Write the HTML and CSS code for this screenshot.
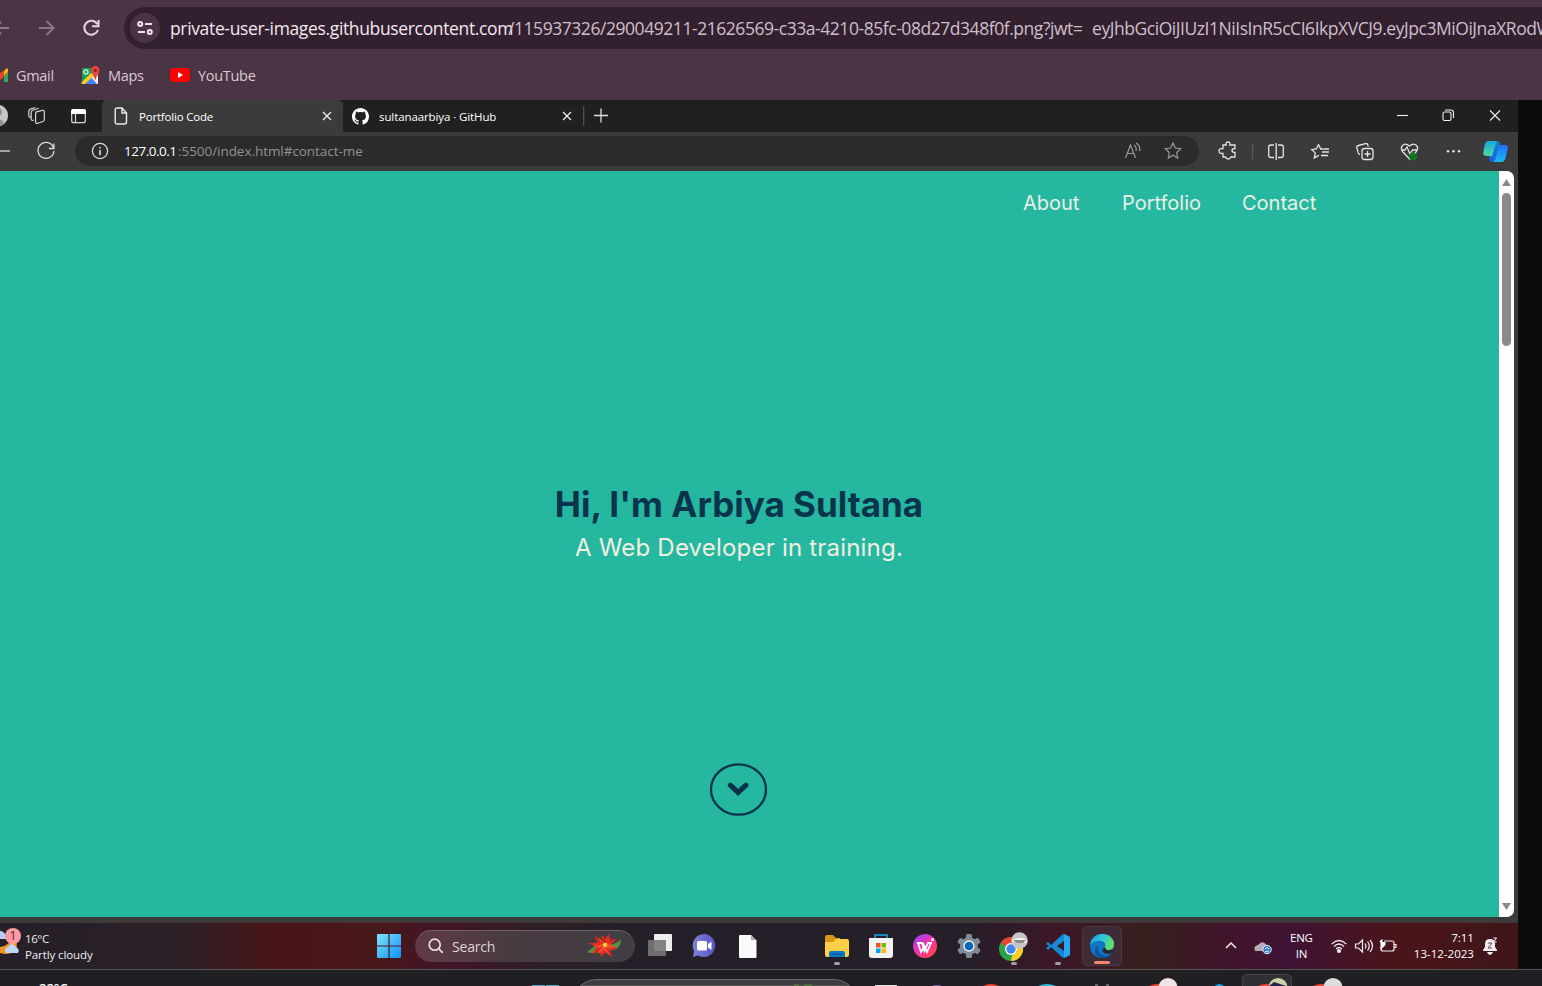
FILE: index.html
```html
<!DOCTYPE html>
<html lang="en">
<head>
<meta charset="utf-8">
<title>Portfolio Code</title>
<link rel="stylesheet" href="styles.css">
</head>
<body>
<header class="chrome">
  <div class="chrome-nav">
    <svg class="nav-back" width="23" height="20" fill="none" stroke="#8a7786" stroke-width="2"><path d="M9 10H-5M1 4l-6 6 6 6"/></svg>
    <svg width="46" height="20" fill="none" stroke="#8a7786" stroke-width="2"><path d="M16 10h14M23.500 3l7 7-7 7"/></svg>
    <svg width="44" height="20" fill="none" stroke="#e6d3e2" stroke-width="2.100"><path d="M28.400 6.200A7 7 0 1 0 29 12"/><path d="M29.500 2v6.300h-6.300"/></svg>
    <div class="omnibox">
      <span class="site-info"><svg width="16" height="14" fill="none" stroke="#eee3ec" stroke-width="2"><circle cx="3.200" cy="3" r="2"/><path d="M8 3h7M1 11h7"/><circle cx="12.800" cy="11" r="2"/></svg></span>
      <span class="long-url"><b>private-user-images.githubusercontent.com</b><i>/115937326/290049211-21626569-c33a-4210-85fc-08d27d348f0f.png?jwt=</i><em>eyJhbGciOiJIUzI1NiIsInR5cCI6IkpXVCJ9.eyJpc3MiOiJnaXRodWIu</em></span>
    </div>
  </div>
  <div class="bookmarks">
    <div class="bookmark gmail"><svg width="9" height="15"><path d="M0 5l8-5v6L0 12z" fill="#ea4335"/><path d="M4 4l1.500-3Q8-.5 8 2v2L4 8z" fill="#fbbc04"/><path d="M4 7.500L8 4v10H4z" fill="#34a853"/></svg><span>Gmail</span></div>
    <div class="bookmark maps"><svg width="19" height="19"><path d="M1 2h16v16H1z" fill="#e9eef3"/><path d="M1 2h13v4L1 17z" fill="#1e9e56"/><path d="M1 17L12 7l5 6v5h-2L9 11l-8 7z" fill="#f5f3e9"/><path d="M3 18l7-7 6 7z" fill="#3f7df0"/><path d="M0 17L10 7l3 3-9 8H1z" fill="#fbc928"/><path d="M6 18l4.500-5 4.500 5z" fill="#4285f4"/><circle cx="5" cy="6" r="2" fill="none" stroke="#c9efd6" stroke-width="1.300"/><path d="M10 4.200a4.300 4.300 0 018.600 0c0 3-3 4.800-3.800 9.300h-1C13 9 10 7 10 4.200z" fill="#e94537"/><circle cx="14.300" cy="4.400" r="1.700" fill="#98241d"/></svg><span>Maps</span></div>
    <div class="bookmark youtube"><svg width="20" height="14"><rect width="20" height="14" rx="3.500" fill="#f00"/><path d="M8 4v6l5-3z" fill="#fff"/></svg><span>YouTube</span></div>
  </div>
</header>

<main class="capture">
  <section class="edge">
    <div class="tabstrip">
      <div class="strip-tools">
        <svg width="102" height="32" fill="none" stroke="#d5d5d5" stroke-width="1.200"><circle cx="-3" cy="15.500" r="11" fill="#c9c7c4" stroke="none"/><circle cx="-3" cy="12" r="5" fill="#96918d" stroke="none"/><path d="M-9 25q5-9 12-4l1 3q-5 4-13 1" fill="#96918d" stroke="none"/>
        <path d="M35.500 12.200l6.700-1.900q2-.3 2.100 1.700v7.500q0 1.500-1.500 2l-5 1.800q-2.200.6-2.200-1.500v-8.200q0-1 .9-1.400z"/><path d="M34 20l-1.500.5q-1.300 0-1.300-1.500v-6.500q0-1.500 1.500-2.200l6-2"/><path d="M31 17l-.8.300q-1.400 0-1.400-1.500v-4.500q0-1.700 1.500-2.200l5-1.600"/>
        <rect x="71.700" y="9.700" width="13.600" height="13" rx="2"/><path d="M71 14v-3q0-2 2-2h11q2 0 2 2v3z" fill="#fff" stroke="none"/><path d="M75.500 14v8.500"/></svg>
      </div>
      <div class="tab active">
        <svg width="14" height="18" fill="none" stroke="#ececec" stroke-width="1.400"><path d="M1.200 3q0-2 2-2H8l4.500 5v9q0 2-2 2H3.200q-2 0-2-2z"/><path d="M8 1v5h4.500"/></svg>
        <span>Portfolio Code</span>
        <svg class="close" width="10" height="10" stroke="#eee" stroke-width="1.300"><path d="M1 1l8 8M9 1L1 9"/></svg>
      </div>
      <div class="tab second">
        <svg width="17" height="17" viewBox="0 0 16 16"><path fill="#fff" d="M8 0C3.580 0 0 3.580 0 8c0 3.540 2.290 6.530 5.470 7.590.4.070.55-.17.55-.38 0-.19-.01-.82-.01-1.490-2.010.37-2.530-.49-2.690-.94-.09-.23-.48-.94-.82-1.130-.28-.15-.68-.52-.01-.53.63-.01 1.080.58 1.230.82.72 1.210 1.870.87 2.330.66.07-.52.28-.87.51-1.070-1.780-.2-3.640-.89-3.640-3.950 0-.87.31-1.590.82-2.150-.08-.2-.36-1.020.08-2.120 0 0 .67-.21 2.200.82.640-.18 1.320-.27 2-.27s1.360.09 2 .27c1.530-1.040 2.200-.82 2.200-.82.440 1.100.16 1.920.08 2.120.510.56.82 1.270.82 2.150 0 3.070-1.870 3.750-3.650 3.950.290.25.54.73.54 1.480 0 1.070-.01 1.930-.01 2.200 0 .21.15.46.55.38A8.010 8.010 0 0016 8c0-4.420-3.580-8-8-8z"/></svg>
        <span>sultanaarbiya · GitHub</span>
        <svg class="close" width="10" height="10" stroke="#eee" stroke-width="1.300"><path d="M1 1l8 8M9 1L1 9"/></svg>
      </div>
      <svg class="new-tab" width="28" height="22" stroke-width="1.300"><path d="M.7 1v20" stroke="#555"/><path d="M11 10.500h14M18 3.500v14" stroke="#ddd"/></svg>
      <svg class="window-controls" width="106" height="16" fill="none" stroke="#eee" stroke-width="1.100"><path d="M1 8.500h11"/><rect x="47" y="5" width="8" height="8.500" rx="1.500"/><path d="M49 3h6q2.500 0 2.500 2.500V11"/><path d="M94 3.500l10 10M104 3.500l-10 10"/></svg>
    </div>

    <div class="toolbar">
      <svg class="tool-nav" width="75" height="30" fill="none" stroke="#ddd" stroke-width="1.300"><path d="M10 15H-4"/><path d="M53.500 11.500A8 8 0 1 0 54 15M53.900 7.500v5h-5"/></svg>
      <div class="address">
        <svg width="18" height="18" fill="none" stroke="#ddd" stroke-width="1.300"><circle cx="9" cy="9" r="7.600"/><path d="M9 8v5.200M9 5v1.500" stroke-width="1.600"/></svg>
        <span class="local-url"><b>127.0.0.1</b><i>:5500/index.html#contact-me</i></span>
        <svg class="address-actions" width="60" height="20" fill="none" stroke="#999" stroke-width="1.200"><path d="M1.500 17l5-13 5 13M3.500 12.500h6M10 4q3 2 2 6M12 2q5 3 3.500 8"/><path d="M49 2l2.300 5 5.400.7-4 3.800 1 5.500-4.700-2.700-4.700 2.700 1-5.500-4-3.800 5.400-.7z"/></svg>
      </div>
      <svg class="extensions" width="319" height="30" fill="none" stroke="#e4e4e4" stroke-width="1.300"><path d="M23 10h3.200q-.8-3 1.800-3t1.800 3H35v3.500q-3 0-3 2t3 2V22h-4.200q-.5 2-2.600 2t-2.600-2H23v-3.500q-4 .2-4-2.500t4-2.500z" transform="translate(1 -1)"/><path d="M53.500 8v15" stroke="#5b5b5b"/>
      <path d="M75 9h-3q-2.300 0-2.300 2.200v8q0 2.300 2.300 2.300h3M79 9h3q2.300 0 2.300 2.200v8q0 2.300-2.300 2.300h-3M77.200 7v17"/>
      <path d="M119.500 8.500l2.200 4.500h3M119.500 8.500l-2.200 4.500-4.500.6 3.500 3.300-1 5 4.500-2.500M123 16h7M125 13h5M122 19.500h7"/>
      <rect x="163" y="12.500" width="11" height="11" rx="2.500"/><path d="M168.500 15v6M165.500 18h6M161 18.500q-1.300 0-1.800-1.600l-1.300-5q-.4-1.900 1.600-2.400l7-1.900q1.900-.4 2.400 1.500l.4 1.400"/>
      <path d="M204 16q-3-4-.5-6.500 3-3 7 .5 4-3.500 7-.5 2.500 2.500-.5 6.500l-6.500 7zM202 14h4l2-3 3 7 2.500-4h5"/><circle cx="214" cy="20.500" r="4" fill="#137c20" stroke="none"/><path d="M212 20.500l1.500 1.500 2.700-3" stroke="#174719" stroke-width="1"/>
      <g fill="#e8e8e8" stroke="none"><circle cx="249" cy="15.300" r="1.200"/><circle cx="254.500" cy="15.300" r="1.200"/><circle cx="260" cy="15.300" r="1.200"/></g>
      <g stroke="none"><path d="M289 5h8q2 0 1.500 2l-3.500 13h-7q-5 0-3.500-5l1.500-7q1-3 3-3z" fill="url(#copA)"/><path d="M300 9h6q4 0 2.500 5l-2 8q-1 4-4 4h-7q-2 0-1.500-2z" fill="url(#copB)"/><path d="M298 5q3 0 3 4l-1 2-4 13q-1 2-3 2-3 0-3-6h3l4-13z" fill="url(#copC)"/></g>
      <defs><linearGradient id="copA" x2="0" y2="1"><stop stop-color="#12a9df"/><stop offset="1" stop-color="#50d9a0"/></linearGradient><linearGradient id="copB" x2="0" y2="1"><stop stop-color="#226cff"/><stop offset="1" stop-color="#18bcef"/></linearGradient><linearGradient id="copC" x2="0" y2="1"><stop stop-color="#1285b5"/><stop offset="1" stop-color="#205eed"/></linearGradient></defs></svg>
    </div>

    <div class="viewport">
      <div class="site">
        <nav><a class="about">About</a><a class="portfolio">Portfolio</a><a class="contact">Contact</a></nav>
        <h1>Hi, I'm Arbiya Sultana</h1>
        <p>A Web Developer in training.</p>
        <svg class="scroll-down" width="59" height="55" fill="none" stroke="#0a344c"><ellipse cx="29.500" cy="27.500" rx="27.500" ry="25.200" stroke-width="2.300"/><path d="M21.300 23.200l7.800 7.300 7.800-7.300" stroke-width="5.200" stroke-linecap="round"/></svg>
      </div>
      <div class="scrollbar">
        <svg width="15" height="22"><path d="M7.500 8l4.500 7H3z" fill="#8a8a8a"/></svg>
        <div class="thumb"></div>
        <svg class="down" width="15" height="22"><path d="M7.500 15l4.500-7H3z" fill="#8a8a8a"/></svg>
      </div>
    </div>
  </section>

  <footer class="taskbar">
    <div class="weather">
      <svg width="25" height="46"><path d="M0 24q10-1 11-10 8 5 5 12-5 7-16 4z" fill="#ef9420"/><path d="M-3 8q8-2 10 8H-3z" fill="#b5cff5"/><path d="M6 30q-3-5 2-6 4-6 8 0 4 2 2 6z" fill="#bdd7fb"/><circle cx="13" cy="13" r="8" fill="#ff99a4"/><text x="13" y="17" class="badge">1</text></svg>
      <div class="forecast"><span>16°C</span><span>Partly cloudy</span></div>
    </div>
    <svg class="start" width="24" height="24" fill="url(#winG)"><defs><linearGradient id="winG" gradientUnits="userSpaceOnUse" x1="0" y1="0" x2="24" y2="24"><stop stop-color="#80e2ff"/><stop offset="1" stop-color="#0b92f4"/></linearGradient></defs><path d="M0 1q0-1 1-1h10.400v11.400H0zM12.600 0H23q1 0 1 1v10.400H12.600zM0 12.600h11.400V24H1q-1 0-1-1zM12.600 12.600H24V23q0 1-1 1H12.600z"/></svg>
    <div class="search">
      <svg width="16" height="16" fill="none" stroke="#e4dce1" stroke-width="1.800"><circle cx="6.700" cy="6.700" r="5.500"/><path d="M10.800 10.800l4 4"/></svg>
      <span>Search</span>
      <svg class="flower" width="36" height="24"><path d="M10 11L1 18q7 3 13-2zM23 10q7 1 12-5 0 11-11 11zM8 16l8 4-3-7z" fill="#5b8d3c"/><path d="M18 11L9 1l2 8-9 0 9 4-5 7 8-3 1 6 5-5 6 5-2-7 7-1-7-4 7-6-8 1 1-6-5 4-4-3z" fill="#e22d1c"/><path d="M18 10l-5-7 1 8-7 1 7 2-3 6 7-4 5 5-1-7 7-1-7-3 3-6z" fill="#ff4a2f"/><path d="M18 11l-9-6M18 11L11 18M18 11l10-7M18 11l6 8M18 11l1-9" stroke="#a81617" stroke-width=".8"/><circle cx="19" cy="11" r="2.200" fill="#f3d738"/></svg>
    </div>
    <div class="apps">
      <span><svg width="24" height="24"><rect x="6" width="18" height="17" rx="1" fill="#eee"/><rect y="6" width="18" height="16" rx="1" fill="#777" opacity=".9"/></svg></span>
      <span><svg width="24" height="24"><path d="M12 0a11.500 11.500 0 11-6 21.500L1 23l1-6A11.500 11.500 0 0112 0z" fill="url(#chatG)"/><rect x="5" y="7" width="10" height="9.500" rx="1.500" fill="#fff"/><path d="M16 10l3.500-2.500v8.500L16 13.500z" fill="#fff"/><defs><linearGradient id="chatG"><stop stop-color="#7c82ce"/><stop offset="1" stop-color="#5757cd"/></linearGradient></defs></svg></span>
      <span><svg width="18" height="23"><path d="M0 1q0-1 1-1h11l5.500 5.500V22q0 1-1 1H1q-1 0-1-1z" fill="#fafafa"/><path d="M12 0v5h5z" fill="#aaa"/></svg></span>
      <span></span>
      <span class="running"><svg width="24" height="24"><path d="M0 3q0-2 2-2h6l3 3h4v5H0z" fill="#d69514"/><path d="M0 8h8l3-3h11q2 0 2 2v14q0 2-2 2H2q-2 0-2-2z" fill="#ffcf49"/><path d="M4 23v-4q0-2 2-2h12q2 0 2 2v4z" fill="#0878c9"/><path d="M6 20h12" stroke="#064b8e"/></svg></span>
      <span><svg width="24" height="24"><path d="M6 5V1h12v4" fill="none" stroke="#1ba8ea" stroke-width="1.500"/><path d="M0 4h24v17q0 3-3 3H3q-3 0-3-3z" fill="#f1f1f1"/><path d="M7 9h4.500v4.500H7z" fill="#f15228"/><path d="M12.500 9H17v4.500h-4.500z" fill="#7db900"/><path d="M7 14.500h4.500V19H7z" fill="#04a5ef"/><path d="M12.500 14.500H17V19h-4.500z" fill="#ffb901"/></svg></span>
      <span><svg width="24" height="24"><defs><linearGradient id="wpsG" x2=".8" y2="1"><stop stop-color="#824cff"/><stop offset=".5" stop-color="#f432b6"/><stop offset="1" stop-color="#ff443e"/></linearGradient></defs><circle cx="12" cy="12" r="12" fill="url(#wpsG)"/><path d="M4 9h5l2.500 8 3.500-8h3l-4 9-4-9M5 9l3 9 3-5M15 9h4" fill="none" stroke="#fff" stroke-width="1.800"/><circle cx="19.500" cy="5.500" r="1.500" fill="#fff"/></svg></span>
      <span><svg width="24" height="24"><g fill="#7f8c97"><circle cx="12" cy="12" r="9"/><g id="cog"><rect x="9" width="6" height="24" rx="1.500"/><rect x="9" width="6" height="24" rx="1.500" transform="rotate(60 12 12)"/><rect x="9" width="6" height="24" rx="1.500" transform="rotate(120 12 12)"/></g></g><circle cx="12" cy="12" r="5.700" fill="#f0f2f3"/><circle cx="12" cy="12" r="4.300" fill="#0868b8"/></svg></span>
      <span class="running"><svg width="29" height="29"><circle cx="12" cy="17" r="12" fill="#2ba24c"/><path d="M12 17L1.600 11A12 12 0 0122.400 11z" fill="#e94436"/><path d="M12 17h12A12 12 0 0012 29l5.500-9z" fill="#ffcf24"/><path d="M12 11h10.400A12 12 0 0112 29l6-10z" fill="#ffcf24"/><circle cx="12" cy="17" r="6" fill="#fff"/><circle cx="12" cy="17" r="4.700" fill="#4285f4"/><circle cx="20.500" cy="8.500" r="8.300" fill="#c6c6c6"/><path d="M13 8q8-4 15 0l-1 3q-7-3-14-1z" fill="#f4f4f4"/><path d="M14 8h13l-3 3h-6z" fill="#888"/></svg></span>
      <span class="running"><svg width="24" height="24"><path d="M17 0l7 3v18l-7 3L5 13l-3 3-2-2 3-2-3-2 2-2 3 3zM18 7l-7 5 7 5z" fill="#1688d4" fill-rule="evenodd"/><path d="M18 0l6 3v18l-6 3z" fill="#27a7f2"/></svg></span>
      <span class="current"><svg width="24" height="24"><defs><linearGradient id="edgeG" x2="1" y2=".4"><stop stop-color="#149bd8"/><stop offset=".55" stop-color="#30c6df"/><stop offset="1" stop-color="#60df65"/></linearGradient></defs><circle cx="12" cy="12" r="12" fill="#1373c5"/><path d="M0 11C1 4 6 0 12 0c8 0 12 5 12 10 0 4-3 6-6 6-4 0-5-2-3-3 2-4-3-7-7-6-4 0-7 3-8 4z" fill="url(#edgeG)"/><path d="M8 11c-2 8 5 13 12 10q-7 6-13 1-5-5 1-11z" fill="#0b549f"/><path d="M15 13q-5 3-1 6 4 2 8 0l3-4-5 1q-4 1-5-3z" fill="#292635"/></svg></span>
    </div>
    <div class="tray">
      <svg class="tray-left" width="60" height="24" fill="none" stroke="#eee" stroke-width="1.500"><path d="M2 14l5-5 5 5"/><path d="M31 17q-2-5 3-6 5-6 9 1 4 2 3 5z" fill="#bca9b6" stroke="none"/><circle cx="43" cy="15.500" r="4.200" fill="#2f7bd0" stroke="#f1f5fa" stroke-width="1"/><path d="M41 15q2-3 4 0M41 17q2 2 4 0" stroke="#fff" stroke-width="1"/></svg>
      <div class="lang"><span>ENG</span><span>IN</span></div>
      <svg class="status" width="66" height="20" fill="none" stroke="#f0edf0" stroke-width="1.200"><path d="M.7 8q7.300-7 14.600 0M3 10.500q5-5 10 0M5 13q3-3 6 0"/><circle cx="8" cy="15" r="1.400" fill="#fff"/><path d="M24.500 8h3l4-4v12l-4-4h-3zM34 7.500q2 2.500 0 5M36.500 5.500q3.500 4.500 0 9M39 4q5 6 0 12"/><path d="M53 5h8q2 0 2 2v6q0 2-2 2H52q-2 0-2-2v-2M63 8.500h2v3h-2"/><path d="M51.500 3v3h3v3l-4 4v3l-1-4v-5l-1-2z" fill="#fff" stroke="none"/></svg>
      <div class="clock"><span>7:11</span><span>13-12-2023</span></div>
      <svg class="bell" width="16" height="18"><path d="M0 13l2-3V7q0-5 5-5t5 5v3l2 3v1H0zM4 15h6q-1 3-3 3t-3-3z" fill="#f2edf0"/><path d="M5 6h4l-4 5h4M10 1h4l-3 4h3" fill="none" stroke="#654047" stroke-width="1"/><path d="M10.500 1h3l-3 4h3" fill="none" stroke="#f2edf0"/></svg>
    </div>
  </footer>
</main>

<footer class="lower-taskbar">
  <span class="lower-temp">22°C</span>
  <svg class="lower-icons" width="1542" height="16"><path d="M532 15h13v1h-13zM546 15h13v1h-13z" fill="#4ea4ca"/><path d="M580 16q8-6.500 17-6.500h236q10 0 17 6.500z" fill="#3d3c40" stroke="#69686b"/><path d="M794 15h5M804 15h8" stroke="#5b9737"/><path d="M875 15h22v1h-22z" fill="#e2e2e2"/><path d="M932 16q5-2 10 0z" fill="#8875b4"/><path d="M983 16q8-4 16 0z" fill="#e94535"/><path d="M1038 16q9-4 18 0z" fill="#27bdd2"/><path d="M1095 15h3M1106 15h3" stroke="#aaa"/><path d="M1149 16q9-4 17 0z" fill="#e94535"/><circle cx="1168" cy="17.500" r="9.500" fill="#f2e5e5"/><path d="M1215 16q4-4 9 0z" fill="#1da5e5"/><rect x="1242.500" y="4.500" width="49" height="20" rx="4" fill="#302f33" stroke="#434246"/><path d="M1258 16q8-4 17 0z" fill="#e94535"/><circle cx="1278" cy="17.500" r="9.500" fill="#c9d4a5"/><path d="M1269 16l5-4 12 4z" fill="#25234e"/><path d="M1313 16q8-4 17 0z" fill="#e94535"/><circle cx="1333" cy="17.500" r="9.500" fill="#ddd"/></svg>
</footer>
</body>
</html>
```

FILE: styles.css
```css
* { box-sizing: border-box; }
html, body { margin: 0; width: 1542px; height: 986px; overflow: hidden; }
body { display: flex; flex-direction: column; background: #0c0c0c; color: #fff; font-family: "Open Sans", "Noto Sans", sans-serif; }
svg { display: block; flex: none; }
b, i, em { font-style: normal; font-weight: 400; }
span, a { white-space: nowrap; }

.chrome { height: 100px; flex: none; background: #4b3545; overflow: hidden; }
.chrome-nav { display: flex; align-items: center; height: 42px; margin-top: 7px; }
.omnibox { display: flex; align-items: center; flex: 1; height: 42px; margin-left: 11px; padding-left: 6px; gap: 10px; overflow: hidden; background: #33202f; border-radius: 21px 0 0 21px; }
.site-info { display: grid; place-items: center; flex: none; width: 30px; height: 30px; border-radius: 50%; background: #4b3545; }
.long-url { display: flex; font-size: 17.500px; line-height: 26px; color: #cdbfca; }
.long-url b { color: #f2e7ef; width: 338px; letter-spacing: -0.350px; }
.long-url i { width: 584px; letter-spacing: -0.450px; }
.long-url em { letter-spacing: -0.450px; }
.bookmarks { display: flex; align-items: center; height: 20px; margin-top: 16px; color: #d9c9d5; font-size: 14.500px; }
.bookmark { display: flex; align-items: center; gap: 7px; height: 20px; letter-spacing: -0.300px; }
.gmail { width: 81px; }
.maps { width: 90px; gap: 8px; }
.youtube { gap: 8px; margin-left: -1px; }

.capture { width: 1518px; height: 869px; flex: none; }
.edge { background: #3b3b3b; height: 822px; }
.tabstrip { display: flex; height: 32px; background: #202020; font-size: 11.500px; }
.strip-tools { width: 102px; }
.tab { display: flex; align-items: center; height: 32px; }
.tab span { flex: 1; }
.active { width: 241px; padding: 0 11px 0 12px; background: #3b3b3b; border-radius: 5px 5px 0 0; }
.active span { padding-left: 11px; letter-spacing: -0.200px; }
.second { width: 240px; padding: 0 11px 0 9px; }
.second span { padding-left: 10px; letter-spacing: -0.100px; }
.new-tab { margin-top: 5px; }
.window-controls { margin: 7px 16px 0 auto; }
.toolbar { display: flex; align-items: center; height: 39px; padding-bottom: 1px; }
.address { display: flex; align-items: center; width: 1124px; height: 30px; padding: 0 15px 0 16px; border-radius: 15px; background: #2b2b2b; }
.local-url { display: flex; flex: 1; margin-left: 15px; font-size: 13.500px; color: #929292; }
.local-url b { width: 54px; color: #fff; letter-spacing: -0.500px; }
.local-url i { letter-spacing: -0.050px; }
.viewport { display: flex; height: 746px; width: 1514px; }
.site { display: flex; flex-direction: column; align-items: center; width: 1499px; background: #26b7a1; padding-right: 21px; font-family: Inter, sans-serif; }
nav { display: flex; align-self: flex-end; height: 64px; align-items: center; margin-right: 157px; font-size: 20px; color: #e9f1e4; }
.about { width: 99px; }
.portfolio { width: 120px; }
.contact { width: 79px; }
h1 { margin: 245px 0 0; height: 48px; line-height: 48px; color: #0a344c; font-size: 35px; font-weight: 700; letter-spacing: 0; white-space: nowrap; }
p { margin: 3px 0 0; height: 34px; line-height: 34px; color: #f0efe0; font-size: 24px; letter-spacing: 0.200px; white-space: nowrap; }
.scroll-down { margin-top: 197px; margin-left: -1px; }
.scrollbar { display: flex; flex-direction: column; align-items: center; width: 15px; background: #fdfdfd; border-radius: 0 7px 7px 0; }
.thumb { width: 9px; height: 153px; border-radius: 5px; background: #8a8a8a; }
.down { margin-top: auto; }

.taskbar { display: flex; align-items: center; height: 47px; background: linear-gradient(90deg, #251f28 0, #2a2028 170px, #4a1518 280px, #48191a 380px, #421427 445px, #2b2027 550px, #241f28 630px, #251f28 960px, #3b1728 1055px, #3b1e20 1120px, #35201f 1150px, #42142b 1230px, #401334 1290px, #4a151a 1400px, #3e151a 1518px); border-top: 1px solid #473334; }
.weather { display: flex; width: 377px; align-items: center; }
.forecast { display: flex; flex-direction: column; height: 34px; font-size: 11.500px; line-height: 16px; margin-top: 3px; color: #eee; letter-spacing: -0.100px; }
.forecast span:first-child { letter-spacing: -0.400px; }
.badge { fill: #57232b; font-size: 12px; text-anchor: middle; }
.start { margin-right: 14px; }
.search { display: flex; align-items: center; width: 220px; height: 32px; padding: 0 12px; border: 1px solid #706068; border-color: #706068 transparent transparent; border-radius: 16px; background: linear-gradient(90deg, #603a45, #483b42 45%, #403e43); color: #ded3da; font-size: 14px; }
.search span { flex: 1; margin-left: 8px; letter-spacing: -0.200px; }
.apps { display: flex; margin-left: 3px; }
.apps > span { position: relative; display: grid; place-items: center; width: 44.200px; height: 40px; }
.apps > .running::after, .apps > .current::after { content: ""; position: absolute; bottom: 1px; width: 6px; height: 3px; border-radius: 2px; background: #a39ca2; }
.apps > .current { width: 40px; margin-left: 2px; border: 1px solid #4b3841; border-radius: 5px; background: #3d2b35; }
.apps > .current::after { width: 16px; background: #f58570; }
.tray { display: flex; align-items: center; flex: 1; padding-left: 102px; font-size: 11.500px; line-height: 16px; }
.lang, .clock { display: flex; flex-direction: column; align-items: center; }
.lang { width: 31px; margin-left: 2px; letter-spacing: -0.200px; }
.status { margin-left: 14px; }
.clock { width: 77px; align-items: flex-end; letter-spacing: 0; }
.bell { margin-left: 9px; }
.lower-taskbar { position: relative; height: 17px; flex: none; overflow: hidden; border-top: 1px solid #555; background: #202024; }
.lower-temp { position: absolute; left: 39px; top: 8px; font-size: 13px; font-weight: 600; line-height: 20px; }
.lower-icons { width: 1542px; }
```
